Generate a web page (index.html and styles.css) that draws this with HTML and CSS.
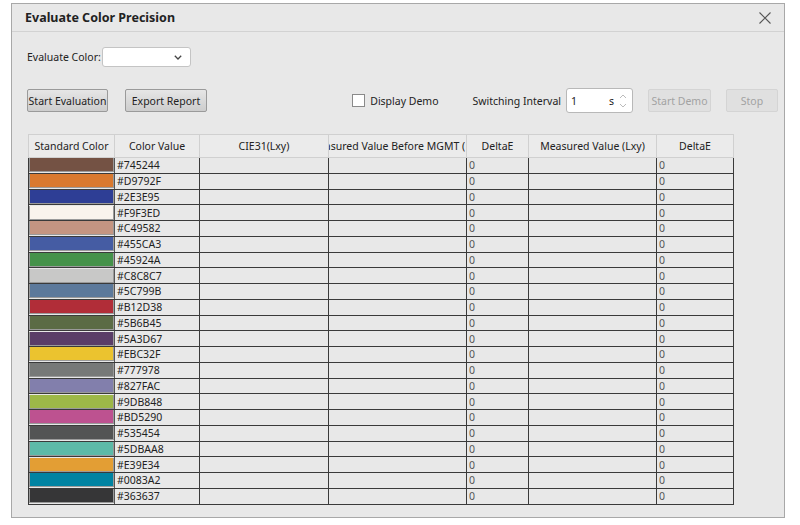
FILE: index.html
```html
<!DOCTYPE html>
<html lang="en">
<head>
    <meta charset="UTF-8">
    <title>Evaluate Color Precision</title>
    <link rel="stylesheet" href="styles.css">
</head>
<body>

    <!-- Dialog -->
    <div class="dialog">
        <div class="title-bar">
            <h1>Evaluate Color Precision</h1>
            <button class="close-btn" aria-label="Close">
                <svg width="12" height="12" viewBox="0 0 12 12"><path d="M0.5 0.5 L11.5 11.5 M11.5 0.5 L0.5 11.5" stroke="#555" stroke-width="1.1" fill="none"/></svg>
            </button>
        </div>

        <div class="body">
            <div class="color-row">
                <label>Evaluate Color:</label>
                <div class="select">
                    <svg width="8" height="5" viewBox="0 0 8 5"><path d="M0.8 0.8 L4 4 L7.2 0.8" stroke="#444" stroke-width="1.3" fill="none"/></svg>
                </div>
            </div>

            <div class="toolbar">
                <button class="btn btn-start">Start Evaluation</button>
                <button class="btn btn-export">Export Report</button>

                <label class="demo-check"><span class="checkbox"></span>Display Demo</label>
                <span class="interval-label">Switching Interval</span>
                <div class="spin">
                    <span class="spin-value">1</span>
                    <span class="spin-unit">s</span>
                    <span class="spin-arrows">
                        <svg width="8" height="20" viewBox="0 0 8 20"><path d="M1 7 L4 4 L7 7 M1 13 L4 16 L7 13" stroke="#bbb" stroke-width="1" fill="none"/></svg>
                    </span>
                </div>
                <button class="btn btn-disabled btn-demo">Start Demo</button>
                <button class="btn btn-disabled btn-stop">Stop</button>
            </div>

            <table class="results">
                <colgroup>
                    <col style="width: 86px">
                    <col style="width: 85px">
                    <col style="width: 129px">
                    <col style="width: 138px">
                    <col style="width: 62px">
                    <col style="width: 128px">
                    <col style="width: 77px">
                </colgroup>
                <thead>
                    <tr>
                        <th>Standard Color</th>
                        <th>Color Value</th>
                        <th>CIE31(Lxy)</th>
                        <th><div class="clip"><span>Measured Value Before MGMT (Lxy)</span></div></th>
                        <th>DeltaE</th>
                        <th>Measured Value (Lxy)</th>
                        <th>DeltaE</th>
                    </tr>
                </thead>
                <tbody id="rows"></tbody>
            </table>
        </div>
    </div>

    <script>
        // Standard colours measured by the evaluation
        const colors = [
            "#745244", "#D9792F", "#2E3E95", "#F9F3ED", "#C49582", "#455CA3",
            "#45924A", "#C8C8C7", "#5C799B", "#B12D38", "#5B6B45", "#5A3D67",
            "#EBC32F", "#777978", "#827FAC", "#9DB848", "#BD5290", "#535454",
            "#5DBAA8", "#E39E34", "#0083A2", "#363637"
        ];

        const rows = document.getElementById('rows');

        colors.forEach(color => {
            const tr = document.createElement('tr');
            tr.innerHTML =
                '<td class="swatch-cell"><div class="swatch" style="background-color: ' + color + '"></div></td>' +
                '<td>' + color + '</td>' +
                '<td></td><td></td>' +
                '<td class="num">0</td>' +
                '<td></td>' +
                '<td class="num">0</td>';
            rows.appendChild(tr);
        });
    </script>

</body>
</html>
```

FILE: styles.css
```css
body {
    margin: 0;
    background-color: #ffffff;
    font-family: "Noto Sans", "Open Sans", sans-serif;
    font-size: 10.5px;
    color: #222;
}

/* Dialog */
.dialog {
    box-sizing: border-box;
    width: 774px;
    height: 515px;
    margin: 3px 0 0 11px;
    border: 1px solid #a8a8a8;
    background-color: #e8e8e8;
}

.title-bar {
    height: 27px;
    border-bottom: 1px solid #d2d2d2;
    display: flex;
    align-items: center;
    justify-content: space-between;
    padding: 0 13px 0 13px;
}

.title-bar h1 {
    margin: 0;
    font-size: 12.5px;
    font-weight: bold;
    color: #222;
}

.close-btn {
    border: none;
    background: none;
    padding: 0;
    width: 12px;
    height: 12px;
    display: flex;
    cursor: pointer;
}

.body {
    padding: 15px 6px 0 15px;
}

/* Evaluate colour selector */
.color-row {
    display: flex;
    align-items: center;
    height: 20px;
}

.color-row label {
    margin-right: 1px;
}

.select {
    box-sizing: border-box;
    width: 89px;
    height: 20px;
    background-color: #ffffff;
    border: 1px solid #c4c4c4;
    border-radius: 3px;
    display: flex;
    align-items: center;
    justify-content: flex-end;
    padding-right: 8px;
}

/* Toolbar */
.toolbar {
    display: flex;
    align-items: center;
    margin-top: 21px;
    height: 25px;
}

.btn {
    box-sizing: border-box;
    height: 23px;
    padding: 0;
    white-space: nowrap;
    font-family: inherit;
    font-size: 10.5px;
    color: #222;
    border: 1px solid #9a9a9a;
    border-radius: 2px;
    background: linear-gradient(#e6e6e6, #cdcdcd);
    cursor: pointer;
}

.btn-start {
    width: 81px;
}

.btn-export {
    width: 82px;
    margin-left: 17px;
}

.btn-disabled {
    color: #a2a2a2;
    border-color: #d4d4d4;
    background: #e0e0e0;
    cursor: default;
}

.btn-demo {
    width: 63px;
    margin-left: 15px;
}

.btn-stop {
    width: 52px;
    margin-left: 15px;
}

.demo-check {
    display: flex;
    align-items: center;
    margin-left: auto;
}

.checkbox {
    box-sizing: border-box;
    width: 13px;
    height: 13px;
    background-color: #ffffff;
    border: 1px solid #8a8a8a;
    margin-right: 5px;
}

.interval-label {
    margin-left: 34px;
    margin-right: 5px;
}

.spin {
    box-sizing: border-box;
    width: 67px;
    height: 25px;
    background-color: #ffffff;
    border: 1px solid #b8b8b8;
    border-radius: 3px;
    display: flex;
    align-items: center;
    padding-left: 4px;
}

.spin-value {
    flex: 1;
}

.spin-unit {
    margin-right: 5px;
}

.spin-arrows {
    display: flex;
    margin-right: 5px;
}

/* Results table */
.results {
    margin: 21px 0 0 1px;
    border-collapse: collapse;
    table-layout: fixed;
    width: 705px;
}

.results th {
    height: 22px;
    padding: 0;
    font-weight: normal;
    text-align: center;
    white-space: nowrap;
    overflow: hidden;
    border: 1px solid #d0d0d0;
    background-color: #ebebeb;
}

.results th .clip {
    width: 136px;
    display: flex;
    justify-content: center;
    overflow: hidden;
}

.results th .clip span {
    flex-shrink: 0;
}

.results td {
    height: 14.75px;
    padding: 0 0 0 2px;
    border: 1px solid #3a3a3a;
    line-height: 14px;
    white-space: nowrap;
}

.results td.num {
    color: #555;
}

.results td.swatch-cell {
    padding: 0;
    border-right-color: #555;
}

.swatch {
    height: 14px;
    border: 1px solid #9a9a9a;
    border-top: none;
    box-sizing: border-box;
}
```
